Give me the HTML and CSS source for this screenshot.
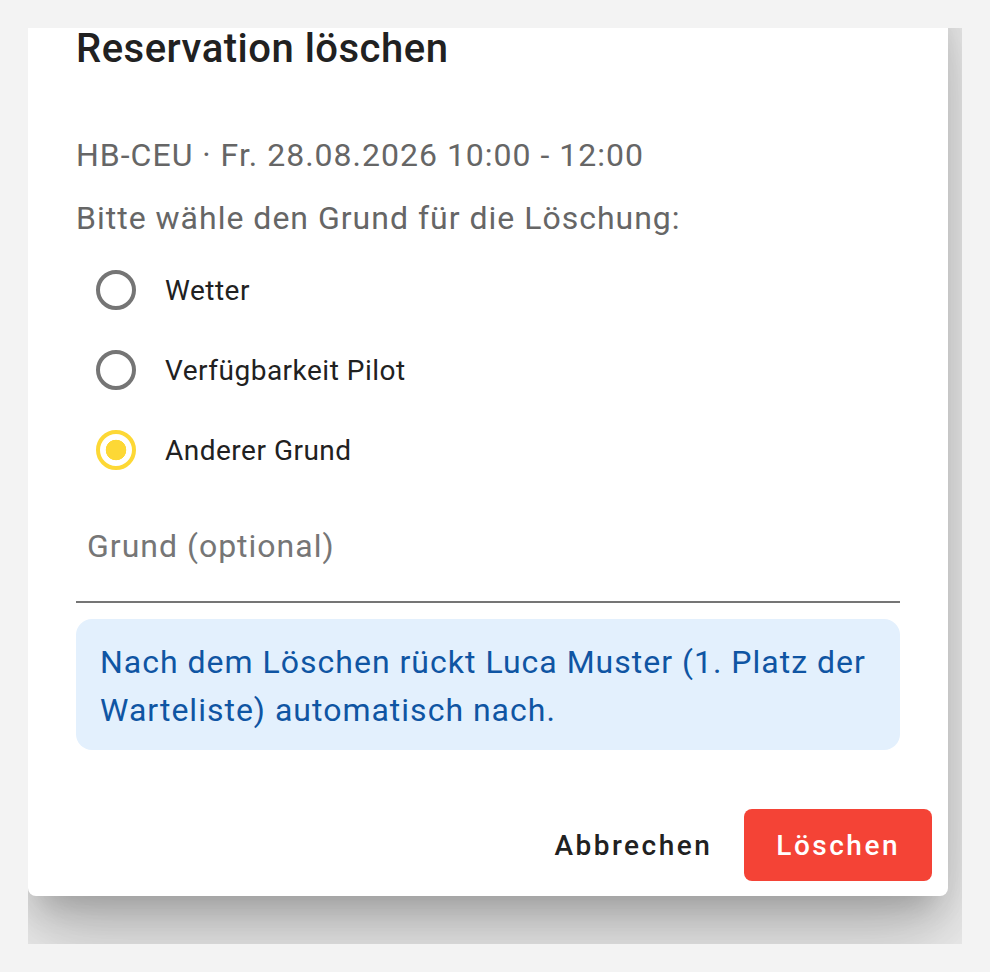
FILE: index.html
```html
<html lang="de">
<head>
<meta charset="utf-8"/>
<title>Reservation löschen</title>
<link rel="stylesheet" href="styles.css">
</head>
<body>

<div class="stage">
  <form class="dialog" onsubmit="return false">
    <h2 class="dialog-title">Reservation löschen</h2>

    <div class="dialog-content">
      <p class="meta">HB-CEU · Fr. 28.08.2026 10:00 - 12:00</p>
      <p class="meta">Bitte wähle den Grund für die Löschung:</p>

      <div class="reasons">
        <label class="reason">
          <span class="radio-box"><input type="radio" name="reason" value="weather"></span>
          <span class="reason-label">Wetter</span>
        </label>
        <label class="reason">
          <span class="radio-box"><input type="radio" name="reason" value="pilot"></span>
          <span class="reason-label">Verfügbarkeit Pilot</span>
        </label>
        <label class="reason">
          <span class="radio-box"><input type="radio" name="reason" value="other" checked></span>
          <span class="reason-label">Anderer Grund</span>
        </label>
      </div>

      <input class="reason-text" type="text" name="reasonText" placeholder="Grund (optional)">

      <div class="notice">Nach dem Löschen rückt Luca Muster (1. Platz der Warteliste) automatisch nach.</div>
    </div>

    <div class="dialog-actions">
      <button type="button" class="btn btn-text">Abbrechen</button>
      <button type="submit" class="btn btn-danger">Löschen</button>
    </div>
  </form>
</div>

</body>
</html>
```

FILE: styles.css
```css
body {
  margin: 0;
  background: #f3f3f3;
  font-family: Roboto, "Liberation Sans", sans-serif;
  color: rgba(0, 0, 0, 0.87);
}

/* viewport of the dialog, shadow gets cut at its edges */
.stage {
  margin: 28px;
  height: 916px;
  overflow: hidden;
}

.dialog {
  width: 920px;
  margin: -47px 0 0 0;
  padding-top: 48px;
  background: #fff;
  border-radius: 8px;
  box-shadow: 0 22px 30px -14px rgba(0, 0, 0, 0.2),
              0 48px 76px 6px rgba(0, 0, 0, 0.14),
              0 18px 92px 16px rgba(0, 0, 0, 0.12);
}

.dialog-title {
  margin: 0 0 62px;
  padding: 0 48px;
  font-size: 40px;
  font-weight: 500;
  line-height: 40px;
  letter-spacing: 0.5px;
  color: #212121;
}

.dialog-content {
  padding: 0 48px;
}

.meta {
  margin: 0 0 15px;
  font-size: 32px;
  line-height: 48px;
  letter-spacing: 1px;
  color: #666;
}

.reasons {
  margin-top: -7px;
}

.reason {
  display: flex;
  align-items: center;
  height: 80px;
}

.radio-box {
  display: flex;
  align-items: center;
  justify-content: center;
  width: 80px;
  height: 80px;
}

.radio-box input {
  appearance: none;
  -webkit-appearance: none;
  margin: 0;
  width: 40px;
  height: 40px;
  border: 4px solid #757575;
  border-radius: 50%;
}

.radio-box input:checked {
  border-color: #fdd835;
  background: radial-gradient(circle, #fdd835 0 10px, transparent 10.6px);
}

.reason-label {
  padding-left: 9px;
  font-size: 28px;
  letter-spacing: 0.5px;
  color: #212121;
}

.reason-text {
  display: block;
  box-sizing: content-box;
  width: calc(100% - 22px);
  height: 48px;
  margin: 0;
  padding: 32px 11px 31px;
  border: 0;
  border-bottom: 2px solid #757575;
  background: transparent;
  font: 32px/48px Roboto, "Liberation Sans", sans-serif;
  letter-spacing: 1px;
  color: #212121;
  outline: none;
}

.reason-text::placeholder {
  color: #767676;
  opacity: 1;
}

.notice {
  margin-top: 16px;
  padding: 19px 24px 16px;
  border-radius: 16px;
  background: #e3f0fd;
  color: #0f55a3;
  font-size: 32px;
  line-height: 48px;
  letter-spacing: 1px;
}

.dialog-actions {
  display: flex;
  justify-content: flex-end;
  gap: 16px;
  margin-top: 42px;
  padding: 17px 16px 15px;
}

.btn {
  height: 72px;
  padding: 0 16px;
  border: 0;
  border-radius: 8px;
  background: transparent;
  font: 500 28px Roboto, "Liberation Sans", sans-serif;
  letter-spacing: 2.5px;
  cursor: pointer;
}

.btn-text {
  color: #212121;
}

.btn-danger {
  padding: 0 32px;
  background: #f44336;
  color: #fff;
}
```
